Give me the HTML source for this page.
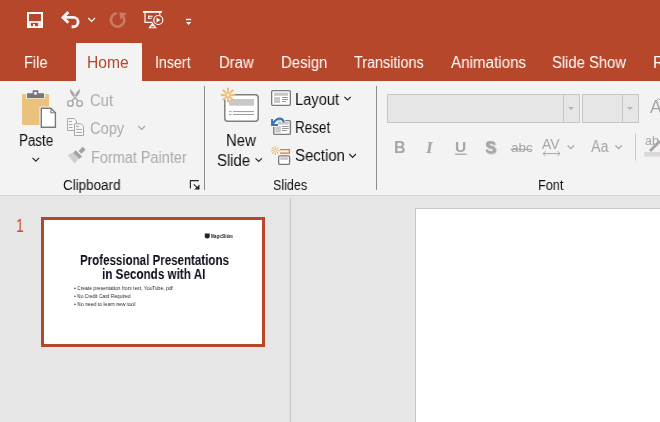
<!DOCTYPE html>
<html><head><meta charset="utf-8">
<style>
html,body{margin:0;padding:0;}
body{width:660px;height:422px;overflow:hidden;position:relative;background:#E6E6E6;font-family:"Liberation Sans",sans-serif;}
.abs{position:absolute;}
.t{position:absolute;white-space:nowrap;line-height:1;transform-origin:0 0;will-change:transform;}
svg{position:absolute;left:0;top:0;}
</style></head><body>
<div class="abs" style="left:0;top:0;width:660px;height:81px;background:#B7472A;"></div>
<div class="abs" style="left:76px;top:43px;width:66px;height:38px;background:#F3F3F3;"></div>
<div class="abs" style="left:0;top:81px;width:660px;height:114px;background:#F3F3F3;"></div>
<div class="abs" style="left:0;top:195px;width:660px;height:1px;background:#D6D6D6;"></div>
<div class="abs" style="left:290px;top:198px;width:1px;height:224px;background:#C6C6C6;"></div>
<div class="abs" style="left:415px;top:208px;width:245px;height:214px;background:#C8C8C8;"></div>
<div class="abs" style="left:416px;top:209px;width:244px;height:213px;background:#FFFFFF;"></div>
<!-- thumbnail -->
<div class="abs" style="left:41px;top:217px;width:218px;height:124px;border:3px solid #B7472A;background:#fff;"></div>
<div class="t" style="left:16.3px;top:217px;font-size:18px;color:#C9502F;transform:scaleX(0.78);">1</div>
<svg width="660" height="422" viewBox="0 0 660 422">
<!-- QAT: save -->
<rect x="28" y="13" width="14" height="14" fill="none" stroke="#fff" stroke-width="2"/>
<rect x="29" y="21" width="12" height="5" fill="#F3E2DC"/>
<rect x="31" y="23" width="7" height="3.2" fill="#B7472A"/>
<rect x="33" y="24" width="2" height="2.5" fill="#fff"/>
<!-- undo -->
<path d="M64 17.4 H73.4 A4.7 4.7 0 0 1 73.4 26.8 H71.6" fill="none" stroke="#F2F2F2" stroke-width="2.9"/>
<path d="M67.3 13.1 L63.0 17.4 L67.3 21.7" fill="none" stroke="#F2F2F2" stroke-width="2.9" stroke-linecap="square"/>
<path d="M88.2 18 L91.6 21.4 L95 18" fill="none" stroke="#fff" stroke-width="1.3"/>
<!-- redo faded -->
<g opacity="0.28">
<path d="M116.8 13.3 A6.7 6.7 0 1 0 123 16" fill="none" stroke="#fff" stroke-width="2.6"/>
<path d="M119.3 12.2 L126.7 13.2 L120.5 19.7 Z" fill="#fff"/>
</g>
<!-- present -->
<g fill="none" stroke="#fff">
<rect x="143" y="11" width="19" height="1.8" fill="#fff" stroke="none"/>
<path d="M145 12.5 V22.3 H152.5" stroke-width="1.2"/>
<path d="M159.8 12.5 V14.8" stroke-width="1.2"/>
<path d="M148 16.3 H152.8 M148 18.3 H151.8 M148.6 15.6 V19" stroke-width="1.1"/>
<circle cx="158.3" cy="20" r="4.5" stroke-width="1.2"/>
</g>
<path d="M156.5 17.4 L160.4 20 L156.5 22.6 Z" fill="#fff"/>
<path d="M152.5 22.5 L148.3 28.2 H156.8 Z" fill="#fff"/>
<path d="M151 26.8 H154.4" stroke="#B7472A" stroke-width="1"/>
<!-- customize -->
<rect x="186" y="18.8" width="5.2" height="1.4" fill="#fff"/>
<path d="M186 22 H191.2 L188.6 25 Z" fill="#fff"/>
<!-- paste -->
<rect x="22" y="94" width="27" height="31" rx="1.2" fill="#EBC27D"/>
<path d="M26 92.6 H32 V89.5 H39 V92.6 H45 V98.6 H26 Z" fill="#F3F3F3"/>
<path d="M27 93.3 H32.7 V90.3 H38.3 V93.3 H44 V98 H27 Z" fill="#767676"/>
<rect x="34.2" y="92" width="2.5" height="2.6" fill="#fff"/>
<path d="M39.5 106.6 H51.5 L57 112 V128.8 H39.5 Z" fill="#F3F3F3"/>
<path d="M41.3 108.3 H50.9 L55.4 112.8 V127.2 H41.3 Z" fill="#fff" stroke="#7A7A7A" stroke-width="1.4"/>
<path d="M50.9 108.3 V112.8 H55.4" fill="none" stroke="#7A7A7A" stroke-width="1.1"/>
<!-- scissors -->
<path d="M70 88.8 Q69.6 94.6 75.4 98.6 L76.4 97.4 Q73.8 91.6 70 88.8 Z M80 88.8 Q80.4 94.6 74.6 98.6 L73.6 97.4 Q76.2 91.6 80 88.8 Z" fill="#A8A8A8"/>
<g fill="none" stroke="#A8A8A8">
<path d="M74.5 97 L78 100.8 M75.5 97 L72 100.8" stroke-width="1.6"/>
<circle cx="70.4" cy="103.4" r="2.8" stroke-width="1.4"/>
<circle cx="79.6" cy="103.4" r="2.8" stroke-width="1.4"/>
</g>
<!-- copy -->
<g fill="#F8F8F8" stroke="#A6A6A6" stroke-width="1">
<path d="M67.6 118.5 H74 L76.5 121 V130.5 H67.6 Z"/>
<path d="M74.5 123.8 H81 L83.5 126.3 V135.5 H74.5 Z"/>
</g>
<g stroke="#A6A6A6" stroke-width="1">
<path d="M69 121.5 H72 M69 124.5 H72.5 M69 127.5 H72.5"/>
<path d="M76 126.4 H79 M76 129.4 H82 M76 132.4 H82"/>
</g>
<path d="M84 125.5 L141.6 125.5" stroke="none"/>
<path d="M138.2 126 L141.6 129.4 L145 126" fill="none" stroke="#A6A6A6" stroke-width="1.2"/>
<!-- format painter -->
<path d="M67.6 155.3 L73.1 152.6 L78.9 158.4 L74.7 163.6 Z" fill="#D2CED2"/>
<path d="M81.98 156.44 L79.44 158.98 L73.22 152.76 L75.76 150.22 Z" fill="#A3A3A3"/>
<path d="M85.56 149.66 L81.46 153.76 L78.64 150.94 L82.74 146.84 Z" fill="#A3A3A3"/>
<!-- paste chevron -->
<path d="M32.5 157.8 L35.8 161.1 L39.1 157.8" fill="none" stroke="#262626" stroke-width="1.2"/>
<!-- dialog launcher -->
<path d="M190.4 188.6 V180.6 H198.8" fill="none" stroke="#262626" stroke-width="1.1"/>
<path d="M193.8 184.3 L198.6 189.1" fill="none" stroke="#262626" stroke-width="1.1"/>
<path d="M199.5 184.4 V189.5 H194.2 Z" fill="#262626"/>
<!-- separators -->
<rect x="204" y="86" width="1" height="104" fill="#8C8C8C"/>
<rect x="376" y="86" width="1" height="104" fill="#8C8C8C"/>
<!-- new slide -->
<rect x="224.8" y="94.8" width="33.4" height="26.4" rx="3" fill="#fff" stroke="#808080" stroke-width="1.5"/>
<rect x="229" y="99" width="25" height="6.7" fill="#C8C8C8"/>
<path d="M229 111.6 H231.5 M233 111.6 H254 M229 114.5 H231.5 M233 114.5 H254" stroke="#9A9A9A" stroke-width="1"/>
<circle cx="228" cy="95" r="5.2" fill="#F3F3F3"/>
<path d="M227.35 97.60 L226.75 102.20 L229.25 102.20 L228.65 97.60 Z M225.70 96.38 L222.02 99.21 L223.79 100.98 L226.62 97.30 Z M225.40 94.35 L220.80 93.75 L220.80 96.25 L225.40 95.65 Z M226.62 92.70 L223.79 89.02 L222.02 90.79 L225.70 93.62 Z M228.65 92.40 L229.25 87.80 L226.75 87.80 L227.35 92.40 Z M230.30 93.62 L233.98 90.79 L232.21 89.02 L229.38 92.70 Z M230.60 95.65 L235.20 96.25 L235.20 93.75 L230.60 94.35 Z M229.38 97.30 L232.21 100.98 L233.98 99.21 L230.30 96.38 Z" fill="#ECBD72"/><circle cx="228" cy="95" r="2.2" fill="none" stroke="#ECBD72" stroke-width="1.5"/>
<path d="M255.5 158.3 L258.7 161.5 L261.9 158.3" fill="none" stroke="#262626" stroke-width="1.2"/>
<!-- layout -->
<rect x="271.65" y="90.65" width="18.7" height="14.7" rx="1" fill="#fff" stroke="#7A7A7A" stroke-width="1.3"/>
<rect x="274" y="92.6" width="14" height="3.2" fill="#C8C8C8"/>
<rect x="274" y="97" width="6" height="6" fill="#C8C8C8"/>
<path d="M282 97.5 H288 M282 99.5 H288 M282 101.5 H286" stroke="#8A8A8A" stroke-width="0.9"/>
<path d="M344.4 96.8 L347.6 100 L350.8 96.8" fill="none" stroke="#262626" stroke-width="1.2"/>
<!-- reset -->
<rect x="273.8" y="120.6" width="16.6" height="13.8" rx="1" fill="#fff" stroke="#7A7A7A" stroke-width="1.4"/>
<rect x="276" y="122" width="12.8" height="2.6" fill="#C8C8C8"/>
<rect x="275.4" y="126" width="5.4" height="6.5" fill="#C8C8C8"/>
<path d="M282 126.5 H288.8 M282 128.5 H288.8 M282 130.5 H287" stroke="#8A8A8A" stroke-width="0.9"/>
<path d="M272 124 L274 124" stroke="none"/>
<path d="M270.5 117.5 H278 V127 H270.5 Z" fill="#F3F3F3"/>
<path d="M272.3 124.6 Q275.5 119.2 279.2 118.7 Q283 118.4 283.9 122.5" fill="none" stroke="#FAFAFA" stroke-width="3.8"/>
<path d="M272.3 124.6 Q275.5 119.2 279.2 118.7 Q283 118.4 283.9 122.5" fill="none" stroke="#3A78B5" stroke-width="2.3"/>
<path d="M272 119 V125 H278" fill="none" stroke="#3A78B5" stroke-width="1.9"/>
<!-- section -->
<path d="M274.90 152.30 L274.55 155.00 L276.05 155.00 L275.70 152.30 Z M273.82 151.52 L271.66 153.18 L272.72 154.24 L274.38 152.08 Z M273.60 150.20 L270.90 149.85 L270.90 151.35 L273.60 151.00 Z M274.38 149.12 L272.72 146.96 L271.66 148.02 L273.82 149.68 Z M275.70 148.90 L276.05 146.20 L274.55 146.20 L274.90 148.90 Z M276.78 149.68 L278.94 148.02 L277.88 146.96 L276.22 149.12 Z M277.00 151.00 L279.70 151.35 L279.70 149.85 L277.00 150.20 Z M276.22 152.08 L277.88 154.24 L278.94 153.18 L276.78 151.52 Z" fill="#EEC27E"/><circle cx="275.3" cy="150.6" r="1.4" fill="none" stroke="#EEC27E" stroke-width="0.9"/>
<path d="M280 149.6 H289.4 V153.2 H280" fill="none" stroke="#E07B2C" stroke-width="1.2"/>
<rect x="278.65" y="155.95" width="10.9" height="8.4" rx="1.2" fill="#fff" stroke="#7A7A7A" stroke-width="1.3"/>
<rect x="280.3" y="157.2" width="7.6" height="2.7" fill="#C8C8C8"/>
<path d="M349.3 154 L352.6 157.3 L355.9 154" fill="none" stroke="#262626" stroke-width="1.2"/>

<!-- font name box -->
<rect x="387.5" y="94.5" width="192" height="28" fill="#E6E6E6" stroke="#C6C6C6" stroke-width="1"/>
<path d="M563.5 94.5 V122.5" stroke="#C6C6C6" stroke-width="1"/>
<path d="M568 107 H574 L571 110 Z" fill="#B4B4B4"/>
<rect x="582.5" y="94.5" width="56" height="28" fill="#E6E6E6" stroke="#C6C6C6" stroke-width="1"/>
<path d="M622.5 94.5 V122.5" stroke="#C6C6C6" stroke-width="1"/>
<path d="M627 107 H633 L630 110 Z" fill="#B4B4B4"/>
<rect x="635" y="133.5" width="1" height="27" fill="#C8C8C8"/>
<path d="M510.5 149.4 H531.5" stroke="#A6A6A6" stroke-width="1.1"/>
<path d="M543 153.6 H560 M545.5 151.3 L543 153.6 L545.5 155.9 M557.5 151.3 L560 153.6 L557.5 155.9" fill="none" stroke="#A6A6A6" stroke-width="1"/>
<path d="M567.6 145.5 L570.8 148.7 L574 145.5" fill="none" stroke="#A6A6A6" stroke-width="1.2"/>
<path d="M615.4 145.5 L618.6 148.7 L621.8 145.5" fill="none" stroke="#A6A6A6" stroke-width="1.2"/>
<rect x="644.2" y="152" width="16" height="4.6" fill="#DDD7DD"/>
<path d="M650 151 L660 141" stroke="#A6A6A6" stroke-width="3"/>
<path d="M656.5 100.5 L658.5 98.5 L660.5 100.5" fill="none" stroke="#A6A6A6" stroke-width="1"/>
<rect x="455" y="153.6" width="11.5" height="1.3" fill="#A6A6A6"/>
<path d="M204.8 233.6 H209.7 V236.5 Q209.7 238.4 207.25 238.6 Q204.8 238.4 204.8 236.5 Z" fill="#222"/>

</svg>
<div class="t" style="left:24.40px;top:54.99px;font-size:15.6px;color:#FFFFFF;font-weight:normal;transform:scaleX(0.9343);">File</div>
<div class="t" style="left:87.40px;top:54.99px;font-size:15.6px;color:#B7472A;font-weight:normal;">Home</div>
<div class="t" style="left:155.00px;top:54.99px;font-size:15.6px;color:#FFFFFF;font-weight:normal;transform:scaleX(0.9109);">Insert</div>
<div class="t" style="left:219.20px;top:54.99px;font-size:15.6px;color:#FFFFFF;font-weight:normal;transform:scaleX(0.9502);">Draw</div>
<div class="t" style="left:280.60px;top:54.99px;font-size:15.6px;color:#FFFFFF;font-weight:normal;transform:scaleX(0.9554);">Design</div>
<div class="t" style="left:354.40px;top:54.69px;font-size:15.6px;color:#FFFFFF;font-weight:normal;transform:scaleX(0.9200);">Transitions</div>
<div class="t" style="left:451.00px;top:54.69px;font-size:15.6px;color:#FFFFFF;font-weight:normal;transform:scaleX(0.9740);">Animations</div>
<div class="t" style="left:551.80px;top:54.99px;font-size:15.6px;color:#FFFFFF;font-weight:normal;transform:scaleX(0.9481);">Slide Show</div>
<div class="t" style="left:653.30px;top:54.69px;font-size:15.6px;color:#FFFFFF;font-weight:normal;">R</div>
<div class="t" style="left:19.40px;top:133.19px;font-size:15.6px;color:#111111;font-weight:normal;transform:scaleX(0.8583);">Paste</div>
<div class="t" style="left:90.20px;top:92.59px;font-size:15.6px;color:#ABABAB;font-weight:normal;transform:scaleX(0.9483);">Cut</div>
<div class="t" style="left:90.20px;top:121.39px;font-size:15.6px;color:#ABABAB;font-weight:normal;transform:scaleX(0.9402);">Copy</div>
<div class="t" style="left:90.80px;top:149.79px;font-size:15.6px;color:#ABABAB;font-weight:normal;transform:scaleX(0.9275);">Format Painter</div>
<div class="t" style="left:226.00px;top:133.39px;font-size:15.6px;color:#111111;font-weight:normal;transform:scaleX(0.9538);">New</div>
<div class="t" style="left:216.60px;top:152.59px;font-size:15.6px;color:#111111;font-weight:normal;transform:scaleX(0.9548);">Slide</div>
<div class="t" style="left:294.60px;top:91.99px;font-size:15.6px;color:#111111;font-weight:normal;transform:scaleX(0.9414);">Layout</div>
<div class="t" style="left:294.60px;top:120.19px;font-size:15.6px;color:#111111;font-weight:normal;transform:scaleX(0.8627);">Reset</div>
<div class="t" style="left:294.60px;top:148.39px;font-size:15.6px;color:#111111;font-weight:normal;transform:scaleX(0.9600);">Section</div>
<div class="t" style="left:63.00px;top:179.11px;font-size:13.8px;color:#111111;font-weight:normal;transform:scaleX(0.9730);">Clipboard</div>
<div class="t" style="left:272.60px;top:179.11px;font-size:13.8px;color:#111111;font-weight:normal;transform:scaleX(0.9083);">Slides</div>
<div class="t" style="left:537.60px;top:178.51px;font-size:13.8px;color:#111111;font-weight:normal;transform:scaleX(0.9189);">Font</div>
<div class="t" style="left:394.20px;top:139.95px;font-size:16px;color:#A6A6A6;font-weight:bold;">B</div>
<div class="t" style="left:426.20px;top:138.68px;font-size:17.5px;color:#A6A6A6;font-weight:bold;font-style:italic;font-family:'Liberation Serif',serif;">I</div>
<div class="t" style="left:455.40px;top:139.07px;font-size:15.5px;color:#A6A6A6;font-weight:bold;">U</div>
<div class="t" style="left:485.00px;top:139.02px;font-size:16.5px;color:#A6A6A6;font-weight:bold;text-shadow:1px 1px 1.5px #9a9a9a;">S</div>
<div class="t" style="left:510.90px;top:141.07px;font-size:13.5px;color:#A6A6A6;font-weight:normal;">abc</div>
<div class="t" style="left:542.40px;top:136.64px;font-size:14px;color:#A6A6A6;font-weight:normal;">AV</div>
<div class="t" style="left:590.90px;top:138.85px;font-size:16px;color:#A6A6A6;font-weight:normal;transform:scaleX(0.8900);">Aa</div>
<div class="t" style="left:649.90px;top:99.18px;font-size:17.5px;color:#A6A6A6;font-weight:normal;">A</div>
<div class="t" style="left:644.60px;top:135.41px;font-size:12.5px;color:#A6A6A6;font-weight:normal;">ab</div>
<div class="t" style="left:79.60px;top:253.34px;font-size:14px;color:#0D0D1A;font-weight:bold;transform:scaleX(0.8250);">Professional Presentations</div>
<div class="t" style="left:102.20px;top:267.04px;font-size:14px;color:#0D0D1A;font-weight:bold;transform:scaleX(0.8340);">in Seconds with AI</div>
<div class="t" style="left:73.50px;top:285.97px;font-size:5.7px;color:#262626;font-weight:normal;transform:scaleX(0.8700);">• Create presentation from text, YouTube, pdf</div>
<div class="t" style="left:73.50px;top:293.77px;font-size:5.7px;color:#262626;font-weight:normal;transform:scaleX(0.8550);">• No Credit Card Required</div>
<div class="t" style="left:73.50px;top:301.67px;font-size:5.7px;color:#262626;font-weight:normal;transform:scaleX(0.8930);">• No need to learn new tool</div>
<div class="t" style="left:210.80px;top:235.00px;font-size:4.6px;color:#222;font-weight:bold;transform:scaleX(0.8286);">MagicSlides</div>
</body></html>
